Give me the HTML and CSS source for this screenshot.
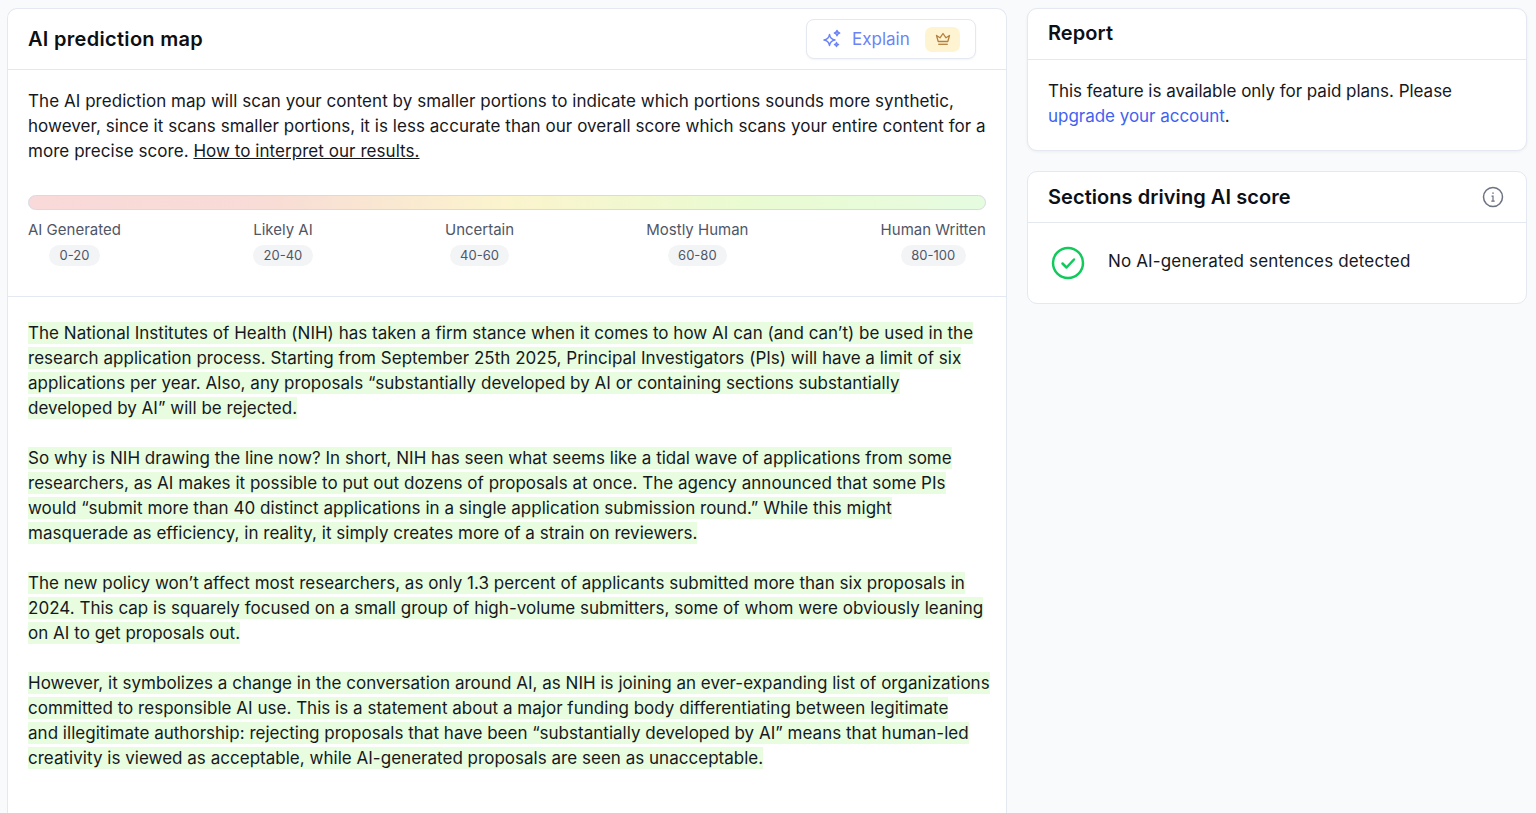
FILE: index.html
```html
<!DOCTYPE html>
<html lang="en">
  <head>
    <meta charset="UTF-8" />
    <meta name="viewport" content="width=device-width, initial-scale=1.0" />
    <title>AI prediction map</title>
    <link rel="stylesheet" href="styles.css">
  </head>
  <body>
    <main class="page">
      <section class="card map">
        <div class="map-head">
          <h2>AI prediction map</h2>
          <button class="explain">
            <svg width="20" height="20" viewBox="0 0 20 20" fill="none" stroke="#6b83f7" stroke-width="1.5" stroke-linejoin="round">
              <path d="M7.500 5.500c.6 3.600 1.900 4.900 5.500 5.500-3.600.6-4.900 1.900-5.500 5.500-.6-3.600-1.900-4.900-5.500-5.500 3.600-.6 4.900-1.900 5.500-5.500z"/>
              <path d="M15 1.500c.3 1.700.9 2.300 2.600 2.600-1.700.3-2.300.9-2.600 2.600-.3-1.700-.9-2.300-2.600-2.600 1.700-.3 2.300-.9 2.600-2.600z"/>
              <path d="M14.500 13.500c.2 1.300.7 1.800 2 2-1.300.2-1.800.7-2 2-.2-1.300-.7-1.800-2-2 1.300-.2 1.800-.7 2-2z"/>
            </svg>
            <span>Explain</span>
            <span class="crown">
              <svg width="16" height="16" viewBox="0 0 16 16" fill="none" stroke="#b5803f" stroke-width="1.3" stroke-linejoin="round">
                <path d="M3.200 10.500 1.500 4.500l3.500 2.300L8 2.500l3 4.300 3.500-2.300-1.700 6z"/>
                <path d="M3.200 13.300h9.600"/>
              </svg>
            </span>
          </button>
        </div>
        <div class="intro">
          <p>The AI prediction map will scan your content by smaller portions to indicate which portions sounds more synthetic,<br>however, since it scans smaller portions, it is less accurate than our overall score which scans your entire content for a<br>more precise score. <a href="#">How to interpret our results.</a></p>
          <div class="scale"></div>
          <div class="legend">
            <div class="legend-item"><span>AI Generated</span><em>0-20</em></div>
            <div class="legend-item"><span>Likely AI</span><em>20-40</em></div>
            <div class="legend-item"><span>Uncertain</span><em>40-60</em></div>
            <div class="legend-item"><span>Mostly Human</span><em>60-80</em></div>
            <div class="legend-item"><span>Human Written</span><em>80-100</em></div>
          </div>
        </div>
        <div class="result">
          <p><mark>The National Institutes of Health (NIH) has taken a firm stance when it comes to how AI can (and can’t) be used in the<br>research application process. Starting from September 25th 2025, Principal Investigators (PIs) will have a limit of six<br>applications per year. Also, any proposals “substantially developed by AI or containing sections substantially<br>developed by AI” will be rejected.</mark></p>
          <p><mark>So why is NIH drawing the line now? In short, NIH has seen what seems like a tidal wave of applications from some<br>researchers, as AI makes it possible to put out dozens of proposals at once. The agency announced that some PIs<br>would “submit more than 40 distinct applications in a single application submission round.” While this might<br>masquerade as efficiency, in reality, it simply creates more of a strain on reviewers.</mark></p>
          <p><mark>The new policy won’t affect most researchers, as only 1.3 percent of applicants submitted more than six proposals in<br>2024. This cap is squarely focused on a small group of high-volume submitters, some of whom were obviously leaning<br>on AI to get proposals out.</mark></p>
          <p><mark>However, it symbolizes a change in the conversation around AI, as NIH is joining an ever-expanding list of organizations<br>committed to responsible AI use. This is a statement about a major funding body differentiating between legitimate<br>and illegitimate authorship: rejecting proposals that have been “substantially developed by AI” means that human-led<br>creativity is viewed as acceptable, while AI-generated proposals are seen as unacceptable.</mark></p>
        </div>
      </section>
      <aside class="side">
        <section class="card report">
          <h3>Report</h3>
          <p>This feature is available only for paid plans. Please<br><a href="#">upgrade your account</a>.</p>
        </section>
        <section class="card sections">
          <div class="sections-head">
            <h3>Sections driving AI score</h3>
            <svg width="22" height="22" viewBox="0 0 22 22" fill="none" stroke="#6b7280" stroke-width="1.500">
              <circle cx="11" cy="11" r="9.500"/>
              <path d="M9.500 10.200H11v5M9.300 15.200h3.400" stroke-width="1.200"/>
              <path d="M11 6.500v1.200" stroke-width="1.600"/>
            </svg>
          </div>
          <div class="sections-body">
            <svg width="34" height="34" viewBox="0 0 34 34" fill="none" stroke="#12c95c" stroke-width="2.500" stroke-linecap="round" stroke-linejoin="round">
              <circle cx="17" cy="17" r="15"/>
              <path d="m11.500 17.500 4 4 7.500-8"/>
            </svg>
            <span>No AI-generated sentences detected</span>
          </div>
        </section>
      </aside>
    </main>
  </body>
</html>
```
FILE: styles.css
```css
* {
  margin: 0;
  padding: 0;
  box-sizing: border-box;
  font-family: Inter, "Noto Sans", sans-serif;
}
html, body {
  height: 100%;
  overflow: hidden;
}
body {
  background: #f9fafb;
  color: #16181d;
}
.page {
  display: flex;
  align-items: flex-start;
  gap: 20px;
  padding: 8px 9px 0 7px;
}
.card {
  background: #fff;
  border: 1px solid #e4e8f1;
  border-radius: 10px;
}
.map {
  width: 1000px;
  height: 805px;
  flex: none;
  border-bottom: 0;
  border-radius: 10px 10px 0 0;
}
.map-head {
  display: flex;
  justify-content: space-between;
  align-items: center;
  height: 61px;
  padding: 0 30px 0 20px;
  border-bottom: 1px solid #e4e8f1;
}
h2 {
  font-size: 20px;
  font-weight: 600;
  color: #0d0f14;
  letter-spacing: 0.3px;
}
.explain {
  display: flex;
  align-items: center;
  width: 170px;
  height: 40px;
  padding: 0 15px 0 15px;
  background: #fff;
  border: 1px solid #e4e8f1;
  border-radius: 8px;
  color: #6b83f7;
  font-size: 17px;
  box-shadow: 0 1px 2px rgba(20, 30, 60, 0.05);
}
.explain svg {
  flex: none;
}
.explain > span:nth-of-type(1) {
  margin-left: 10px;
}
.crown {
  display: flex;
  justify-content: center;
  align-items: center;
  width: 35px;
  height: 25px;
  margin-left: auto;
  background: #fff4d1;
  border-radius: 7px;
}
.intro {
  height: 227px;
  padding: 19px 20px 0;
  border-bottom: 1px solid #e4e8f1;
}
.intro p, .result p {
  font-size: 17px;
  line-height: 25px;
  white-space: nowrap;
}
.intro p {
  letter-spacing: 0.05px;
}
.result p {
  letter-spacing: 0.02px;
}
.intro a {
  color: inherit;
}
.scale {
  height: 15px;
  margin-top: 31px;
  border: 1px solid #d5dae3;
  border-radius: 8px;
  background: linear-gradient(90deg, #f9d9d9 0%, #f8dcd6 25%, #fbf4cd 50%, #eafbd2 75%, #e6fce0 100%);
}
.legend {
  display: flex;
  justify-content: space-between;
  margin-top: 10px;
}
.legend-item {
  display: flex;
  flex-direction: column;
  align-items: center;
  gap: 5px;
  font-size: 15px;
  line-height: 20px;
  color: #4f5666;
}
.legend-item em {
  font-style: normal;
  font-size: 13px;
  line-height: 21px;
  padding: 0 10.5px;
  background: #f3f4f6;
  border-radius: 11px;
}
.result {
  padding: 24px 20px 0;
}
.result p {
  margin-bottom: 25px;
}
mark {
  color: inherit;
  background: #e8fde0;
  padding: 1px 0;
}
.side {
  display: flex;
  flex-direction: column;
  gap: 20px;
  width: 500px;
  flex: none;
}
h3 {
  font-size: 20px;
  font-weight: 600;
  color: #0d0f14;
  letter-spacing: 0.06px;
}
.report {
  box-shadow: 0 1px 3px rgba(20, 30, 60, 0.06);
}
.report h3 {
  height: 51px;
  padding: 12px 20px 0;
  border-bottom: 1px solid #e4e8f1;
}
.report p {
  padding: 19px 20px 21px;
  font-size: 17px;
  line-height: 25px;
  letter-spacing: -0.03px;
}
.report a {
  color: #3f62f0;
  text-decoration: none;
}
.sections-head {
  display: flex;
  justify-content: space-between;
  align-items: center;
  height: 51px;
  padding: 0 22px 0 20px;
  border-bottom: 1px solid #e4e8f1;
}
.sections-body {
  display: flex;
  align-items: center;
  gap: 23px;
  height: 80px;
  padding-left: 23px;
  font-size: 17px;
  letter-spacing: 0.15px;
}
.sections-body span {
  margin-bottom: 4px;
}
```
